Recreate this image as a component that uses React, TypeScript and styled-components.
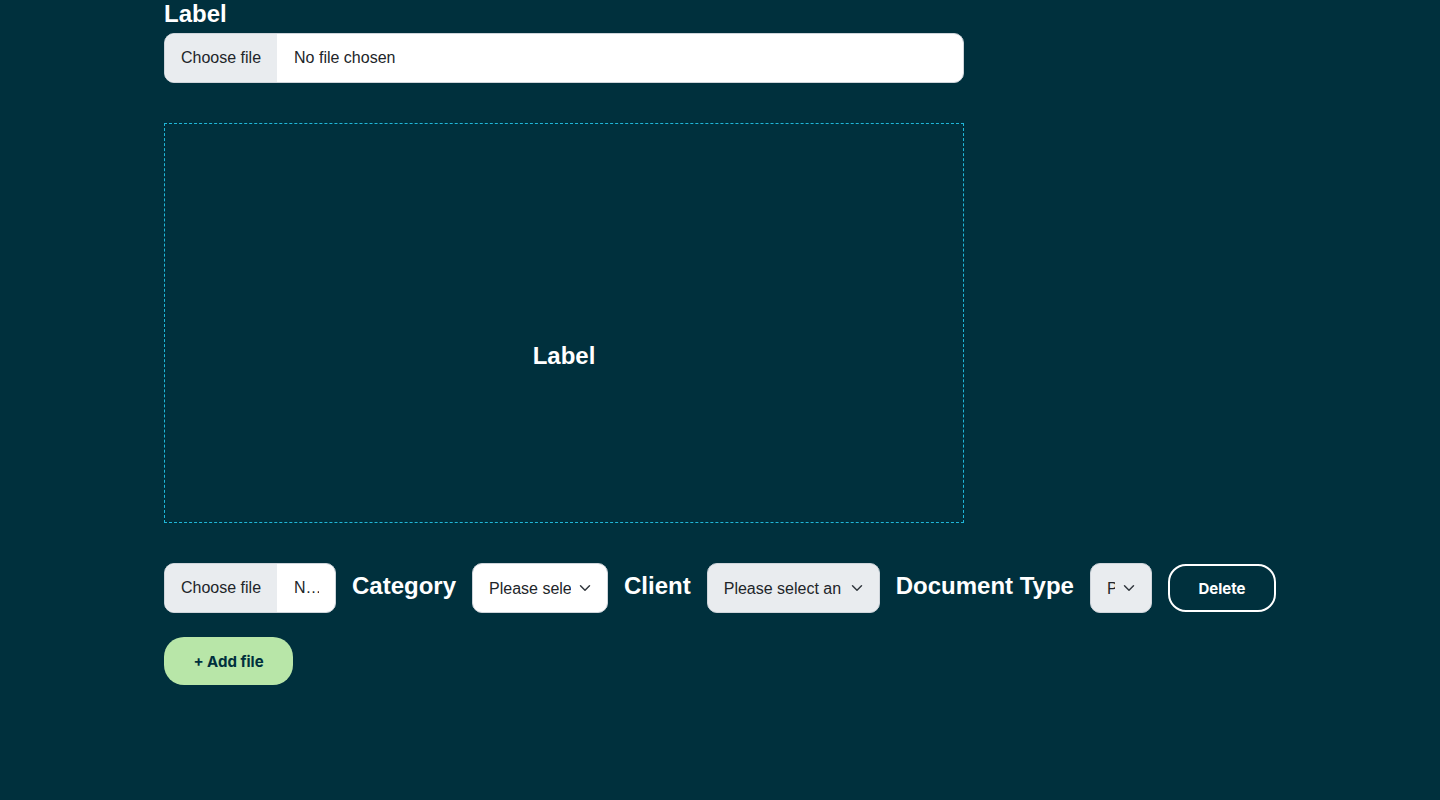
import React from 'react';
import styled, { createGlobalStyle } from 'styled-components';

const GlobalStyle = createGlobalStyle`
  html, body {
    margin: 0;
    padding: 0;
    background: #00303d;
    font-family: "Liberation Sans", Arial, sans-serif;
  }
  * {
    box-sizing: border-box;
  }
`;

const chevron =
  "url(\"data:image/svg+xml,%3csvg xmlns='http://www.w3.org/2000/svg' viewBox='0 0 16 16'%3e%3cpath fill='none' stroke='%23343a40' stroke-linecap='round' stroke-linejoin='round' stroke-width='2' d='m2 5 6 6 6-6'/%3e%3c/svg%3e\")";

const Page = styled.div`
  min-height: 800px;
  background: #00303d;
  padding: 0 164px;
`;

const Form = styled.div`
  width: 800px;
  display: flex;
  flex-direction: column;
`;

const Label = styled.label`
  display: block;
  color: #ffffff;
  font-size: 24px;
  font-weight: 700;
  line-height: 28px;
  white-space: nowrap;
`;

const TopLabel = styled(Label)`
  margin-bottom: 5px;
`;

const RowLabel = styled(Label)`
  margin-bottom: 4px;
`;

const FileBox = styled.label<{ $width?: number }>`
  display: flex;
  align-items: stretch;
  width: ${(p) => (p.$width ? `${p.$width}px` : '100%')};
  height: 50px;
  font-size: 16px;
  color: #212529;
  background: #ffffff;
  border: 1px solid #ced4da;
  border-radius: 10px;
  overflow: hidden;
  flex-shrink: 0;
  cursor: pointer;

  input {
    display: none;
  }
`;

const FileButton = styled.span`
  display: flex;
  align-items: center;
  padding: 0 16px;
  background: #e9ecef;
  white-space: nowrap;
  flex-shrink: 0;
`;

const FileName = styled.span`
  display: flex;
  align-items: center;
  min-width: 0;
  padding: 0 16px 0 17px;

  span {
    overflow: hidden;
    white-space: nowrap;
    text-overflow: ellipsis;
  }
`;

const DropZone = styled.div`
  margin-top: 40px;
  height: 400px;
  padding-top: 66px;
  border: 1px dashed #1fb6d8;
  display: flex;
  align-items: center;
  justify-content: center;
`;

const Row = styled.div`
  margin-top: 40px;
  display: flex;
  align-items: center;
  gap: 16px;
  width: max-content;
`;

const Select = styled.select<{ $width: number; $muted?: boolean }>`
  appearance: none;
  width: ${(p) => p.$width}px;
  height: 50px;
  padding: 0 36px 0 16px;
  font-family: "Liberation Sans", Arial, sans-serif;
  font-size: 16px;
  color: #212529;
  background-color: ${(p) => (p.$muted ? '#e9ecef' : '#ffffff')};
  background-image: ${chevron};
  background-repeat: no-repeat;
  background-position: right 15px center;
  background-size: 14px 12px;
  border: 1px solid #ced4da;
  border-radius: 10px;
  outline: none;
  flex-shrink: 0;
`;

const OutlineButton = styled.button`
  width: 108px;
  height: 48px;
  border: 2px solid #ffffff;
  border-radius: 18px;
  background: transparent;
  color: #ffffff;
  font-family: Inter, "Noto Sans", sans-serif;
  font-size: 15px;
  font-weight: 700;
  cursor: pointer;
`;

const AddButton = styled.button`
  margin-top: 24px;
  width: 129px;
  height: 48px;
  border: 0;
  border-radius: 20px;
  background: #b8e6a8;
  color: #00303d;
  font-family: Inter, "Noto Sans", sans-serif;
  font-size: 15px;
  font-weight: 700;
  cursor: pointer;
`;

const placeholder = 'Please select an option';

const FileField = ({ width }: { width?: number }) => (
  <FileBox $width={width}>
    <input type="file" />
    <FileButton>Choose file</FileButton>
    <FileName>
      <span>No file chosen</span>
    </FileName>
  </FileBox>
);

const App = () => {
  return (
    <Page>
      <GlobalStyle />
      <Form>
        <TopLabel>Label</TopLabel>
        <FileField />
        <DropZone>
          <Label>Label</Label>
        </DropZone>
        <Row>
          <FileField width={172} />
          <RowLabel>Category</RowLabel>
          <Select $width={136} defaultValue="">
            <option value="">{placeholder}</option>
          </Select>
          <RowLabel>Client</RowLabel>
          <Select $width={173} $muted defaultValue="">
            <option value="">{placeholder}</option>
          </Select>
          <RowLabel>Document Type</RowLabel>
          <Select $width={62} $muted defaultValue="">
            <option value="">{placeholder}</option>
          </Select>
          <OutlineButton>Delete</OutlineButton>
        </Row>
        <div>
          <AddButton>+ Add file</AddButton>
        </div>
      </Form>
    </Page>
  );
};

export default App;
